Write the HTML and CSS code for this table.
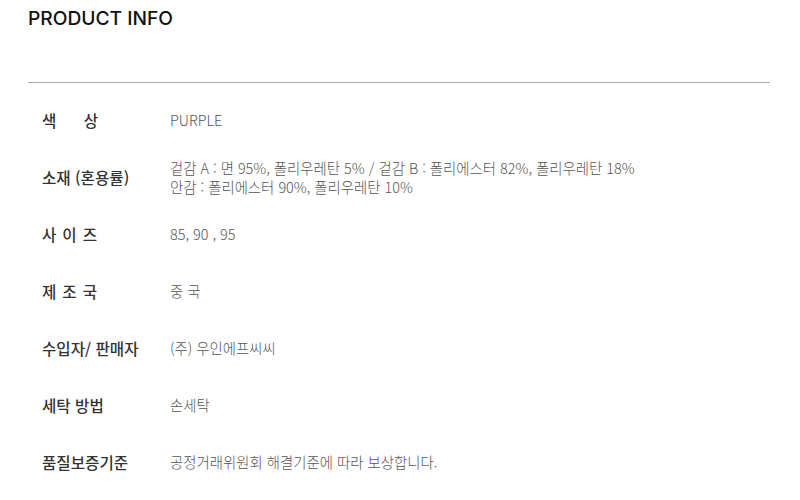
FILE: index.html
```html
<!DOCTYPE html>
<html lang="ko">
<head>
<meta charset="utf-8">
<link rel="stylesheet" href="styles.css">
</head>
<body>
<section class="info">
  <h2 class="title">PRODUCT INFO</h2>
  <div class="rule"></div>
  <div class="table">
    <div class="row"><div class="label wide">색상</div><div class="value">PURPLE</div></div>
    <div class="row"><div class="label">소재 (혼용률)</div><div class="value">겉감 A : 면 95%, 폴리우레탄 5% / 겉감 B : 폴리에스터 82%, 폴리우레탄 18%<br>안감 : 폴리에스터 90%, 폴리우레탄 10%</div></div>
    <div class="row"><div class="label spaced">사 이 즈</div><div class="value">85, 90 , 95</div></div>
    <div class="row"><div class="label spaced">제 조 국</div><div class="value">중 국</div></div>
    <div class="row"><div class="label">수입자/ 판매자</div><div class="value">(주) 우인에프씨씨</div></div>
    <div class="row"><div class="label">세탁 방법</div><div class="value">손세탁</div></div>
    <div class="row"><div class="label">품질보증기준</div><div class="value">공정거래위원회 해결기준에 따라 보상합니다.</div></div>
  </div>
</section>
</body>
</html>
```
FILE: styles.css
```css
html, body {
  margin: 0;
  padding: 0;
  background: #fff;
}
body {
  font-family: "Noto Sans CJK KR", "Noto Sans", sans-serif;
}
.info {
  padding: 6px 30px 0 28px;
}
.title {
  margin: 0;
  font-family: Inter, "Noto Sans CJK KR", sans-serif;
  font-size: 19.2px;
  font-weight: 500;
  line-height: 24px;
  color: #111;
}
.rule {
  margin-top: 52px;
  height: 1px;
  background: #a8a8a8;
}
.table {
  padding-top: 8px;
}
.row {
  display: grid;
  grid-template-columns: 128px 1fr;
  align-items: center;
  min-height: 57px;
  padding-left: 14px;
}
.label {
  font-size: 15.6px;
  font-weight: 500;
  line-height: 20px;
  color: #333;
}
.label.wide {
  letter-spacing: 27.4px;
}
.label.spaced {
  letter-spacing: 0.8px;
}
.value {
  font-size: 14.4px;
  font-weight: 300;
  line-height: 19px;
  color: #555;
}
```
